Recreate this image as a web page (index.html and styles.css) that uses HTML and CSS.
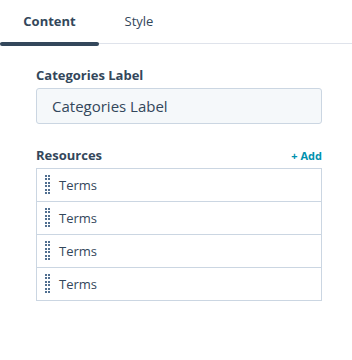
FILE: index.html
```html
<!DOCTYPE html>
<html lang="en">
<head>
    <meta charset="UTF-8">
    <meta name="viewport" content="width=device-width, initial-scale=1.0">
    <title>Module Editor</title>
    <link rel="stylesheet" href="styles.css">
</head>
<body>
    <div class="tabs">
        <div class="tab active">Content</div>
        <div class="tab">Style</div>
    </div>

    <div class="panel">
        <div class="field">
            <label class="field-label" for="catLabel">Categories Label</label>
            <input class="text-input" id="catLabel" type="text" value="Categories Label">
        </div>

        <div class="field">
            <div class="field-head">
                <span class="field-label">Resources</span>
                <a class="add-link" href="#">+ Add</a>
            </div>
            <ul class="item-list">
                <li class="item"><span class="handle"></span>Terms</li>
                <li class="item"><span class="handle"></span>Terms</li>
                <li class="item"><span class="handle"></span>Terms</li>
                <li class="item"><span class="handle"></span>Terms</li>
            </ul>
        </div>
    </div>
</body>
</html>
```

FILE: styles.css
```css
body {
    margin: 0;
    font-family: "Open Sans", Lato, sans-serif;
    color: #33475b;
    background-color: white;
}
.tabs {
    display: flex;
    height: 43px;
    border-bottom: 1px solid #dfe3eb;
}
.tab {
    position: relative;
    display: flex;
    align-items: center;
    justify-content: center;
    padding-bottom: 1px;
    font-size: 13px;
    color: #33475b;
}
.tab:first-child {
    width: 99px;
}
.tab:nth-child(2) {
    width: 80px;
}
.tab.active {
    font-weight: bold;
}
.tab.active::after {
    content: "";
    position: absolute;
    left: 0;
    right: 0;
    bottom: -3px;
    height: 4px;
    border-radius: 2px;
    background-color: #33475b;
}
.panel {
    padding: 22px 30px 0 36px;
}
.field {
    margin-bottom: 22px;
}
.field-label {
    display: block;
    font-size: 13px;
    font-weight: bold;
    line-height: 18px;
    margin-bottom: 4px;
}
.field-head {
    display: flex;
    justify-content: space-between;
    align-items: baseline;
}
.field-head .field-label {
    margin-bottom: 4px;
}
.add-link {
    font-size: 11px;
    font-weight: bold;
    color: #0091ae;
    text-decoration: none;
}
.text-input {
    box-sizing: border-box;
    width: 100%;
    height: 36px;
    padding: 0 15px;
    border: 1px solid #cbd6e2;
    border-radius: 3px;
    background-color: #f5f8fa;
    font-family: inherit;
    font-size: 15px;
    color: #33475b;
}
.item-list {
    list-style: none;
    margin: 0;
    padding: 0;
    border: 1px solid #cbd6e2;
}
.item {
    display: flex;
    align-items: center;
    height: 32px;
    padding-left: 8px;
    font-size: 13px;
    border-top: 1px solid #cbd6e2;
}
.item:first-child {
    border-top: none;
}
.handle {
    width: 5px;
    height: 20px;
    margin-right: 9px;
    background: repeating-linear-gradient(to bottom, #516f90 0 2px, transparent 2px 3.4px);
    -webkit-mask: linear-gradient(to right, black 0 2px, transparent 2px 3px, black 3px 5px);
    mask: linear-gradient(to right, black 0 2px, transparent 2px 3px, black 3px 5px);
}
```
